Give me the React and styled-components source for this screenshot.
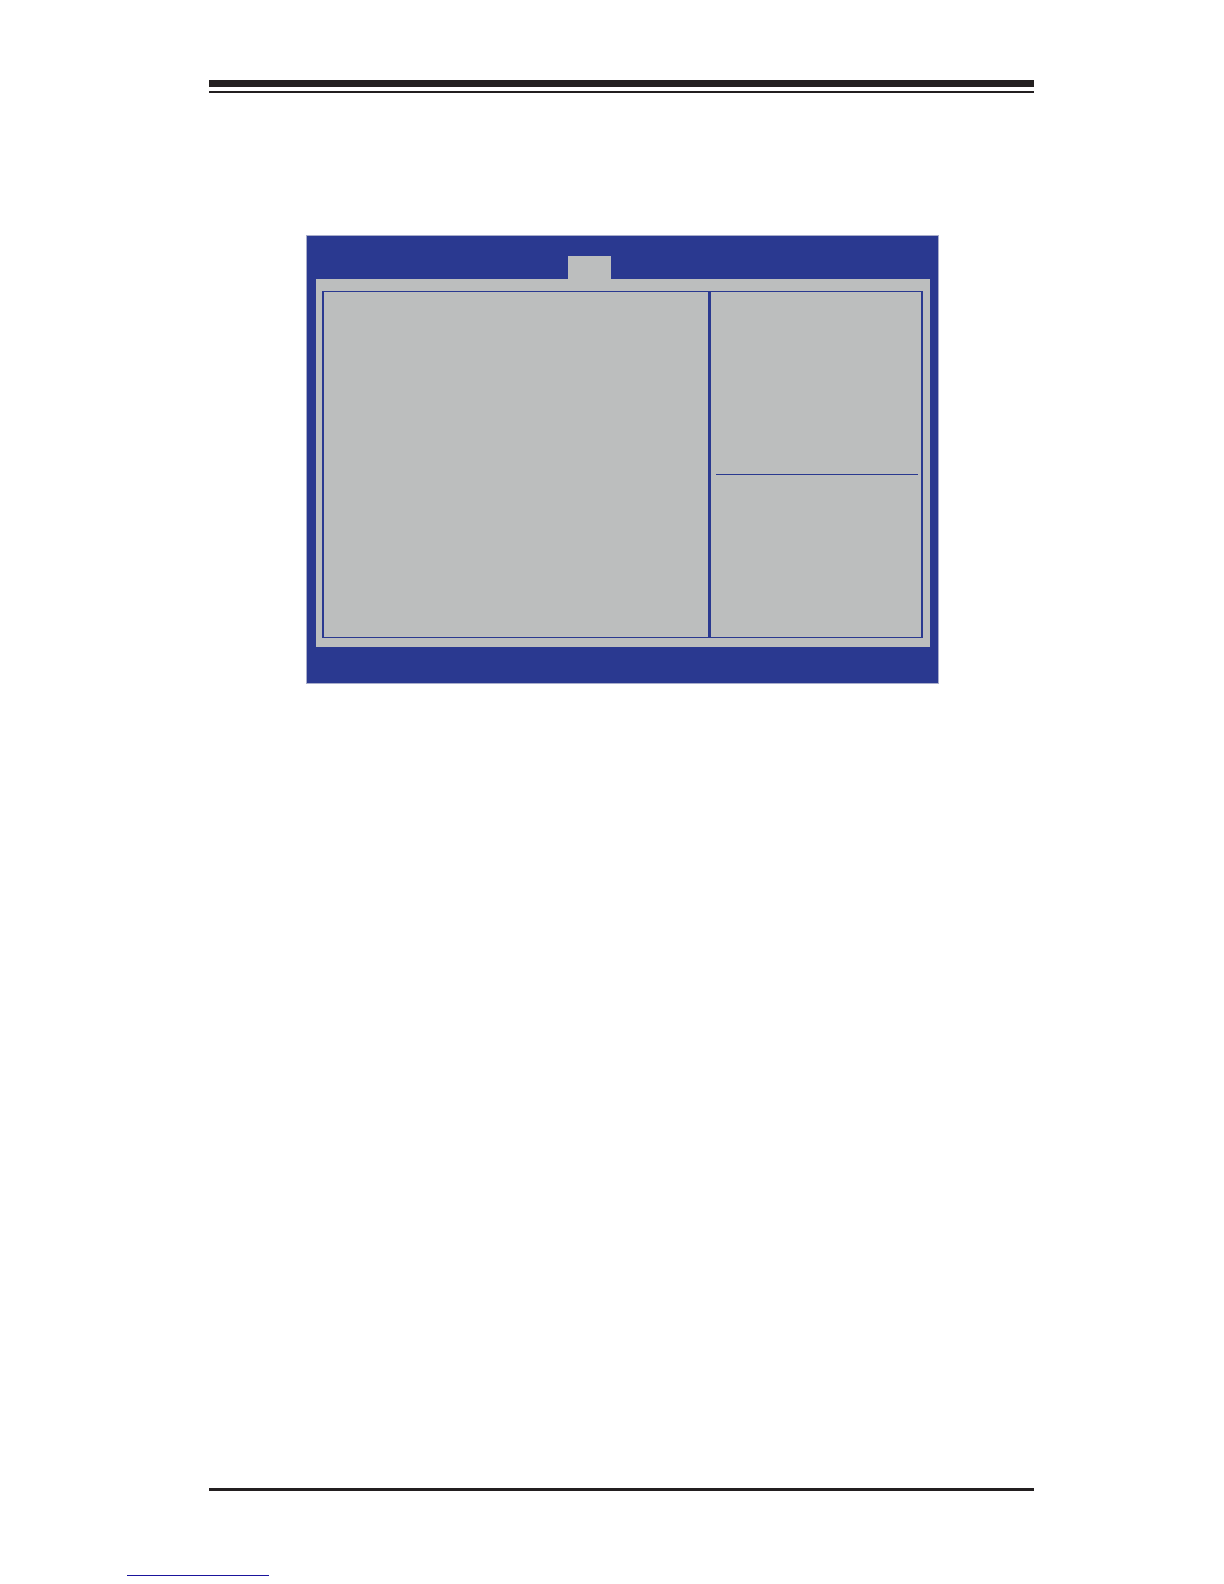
import React from 'react';
import styled, { createGlobalStyle } from 'styled-components';

const ink = '#231f20';
const blue = '#2a3990';
const grey = '#bcbebe';

const GlobalStyle = createGlobalStyle`
  * { box-sizing: border-box; }
  body {
    margin: 0;
    background: #fff;
    font-family: "Liberation Sans", Arial, sans-serif;
  }
`;

const Page = styled.div`
  display: flex;
  flex-direction: column;
  min-height: 100vh;
  padding: 80px 0 8px;
`;

const Sheet = styled.div`
  flex: 1;
  display: flex;
  flex-direction: column;
  margin: 0 190px 0 209px;
`;

const HeaderRule = styled.header`
  height: 13px;
  border-top: 7px solid ${ink};
  border-bottom: 2px solid ${ink};
`;

const Content = styled.main`
  flex: 1;
  padding: 142px 95px 0 97px;
`;

const SetupScreen = styled.section`
  display: flex;
  flex-direction: column;
  padding: 20px 8px 36px 9px;
  border: 1px solid #a9aecb;
  background: ${blue};
`;

const TabBar = styled.nav`
  display: flex;
  padding-left: 252px;
`;

const Tab = styled.button`
  width: 43px;
  height: 23px;
  padding: 0;
  border: 0;
  background: ${grey};
`;

const Panel = styled.div`
  padding: 12px 7px 9px 6px;
  background: ${grey};
`;

const Frame = styled.div`
  display: flex;
  border: solid ${blue};
  border-width: 1px 2px;
`;

const OptionsPane = styled.div`
  flex: 1;
`;

const HelpPane = styled.aside`
  width: 213px;
  padding: 0 3px 0 5px;
  border-left: 3px solid ${blue};
`;

const ItemHelp = styled.div`
  height: 183px;
  border-bottom: 1px solid ${blue};
`;

const KeyHelp = styled.div`
  height: 162px;
`;

const FooterRule = styled.div`
  height: 3px;
  background: ${ink};
`;

const Footer = styled.footer`
  padding: 84px 0 0 127px;
`;

const FooterLink = styled.a`
  display: block;
  width: 142px;
  height: 1px;
  background: #1a149c;
`;

export default function App() {
  return (
    <Page>
      <GlobalStyle />
      <Sheet>
        <HeaderRule />
        <Content>
          <SetupScreen>
            <TabBar>
              <Tab type="button" aria-label="Current tab" />
            </TabBar>
            <Panel>
              <Frame>
                <OptionsPane />
                <HelpPane>
                  <ItemHelp />
                  <KeyHelp />
                </HelpPane>
              </Frame>
            </Panel>
          </SetupScreen>
        </Content>
        <FooterRule />
      </Sheet>
      <Footer>
        <FooterLink href="#" aria-label="Footer link" />
      </Footer>
    </Page>
  );
}
